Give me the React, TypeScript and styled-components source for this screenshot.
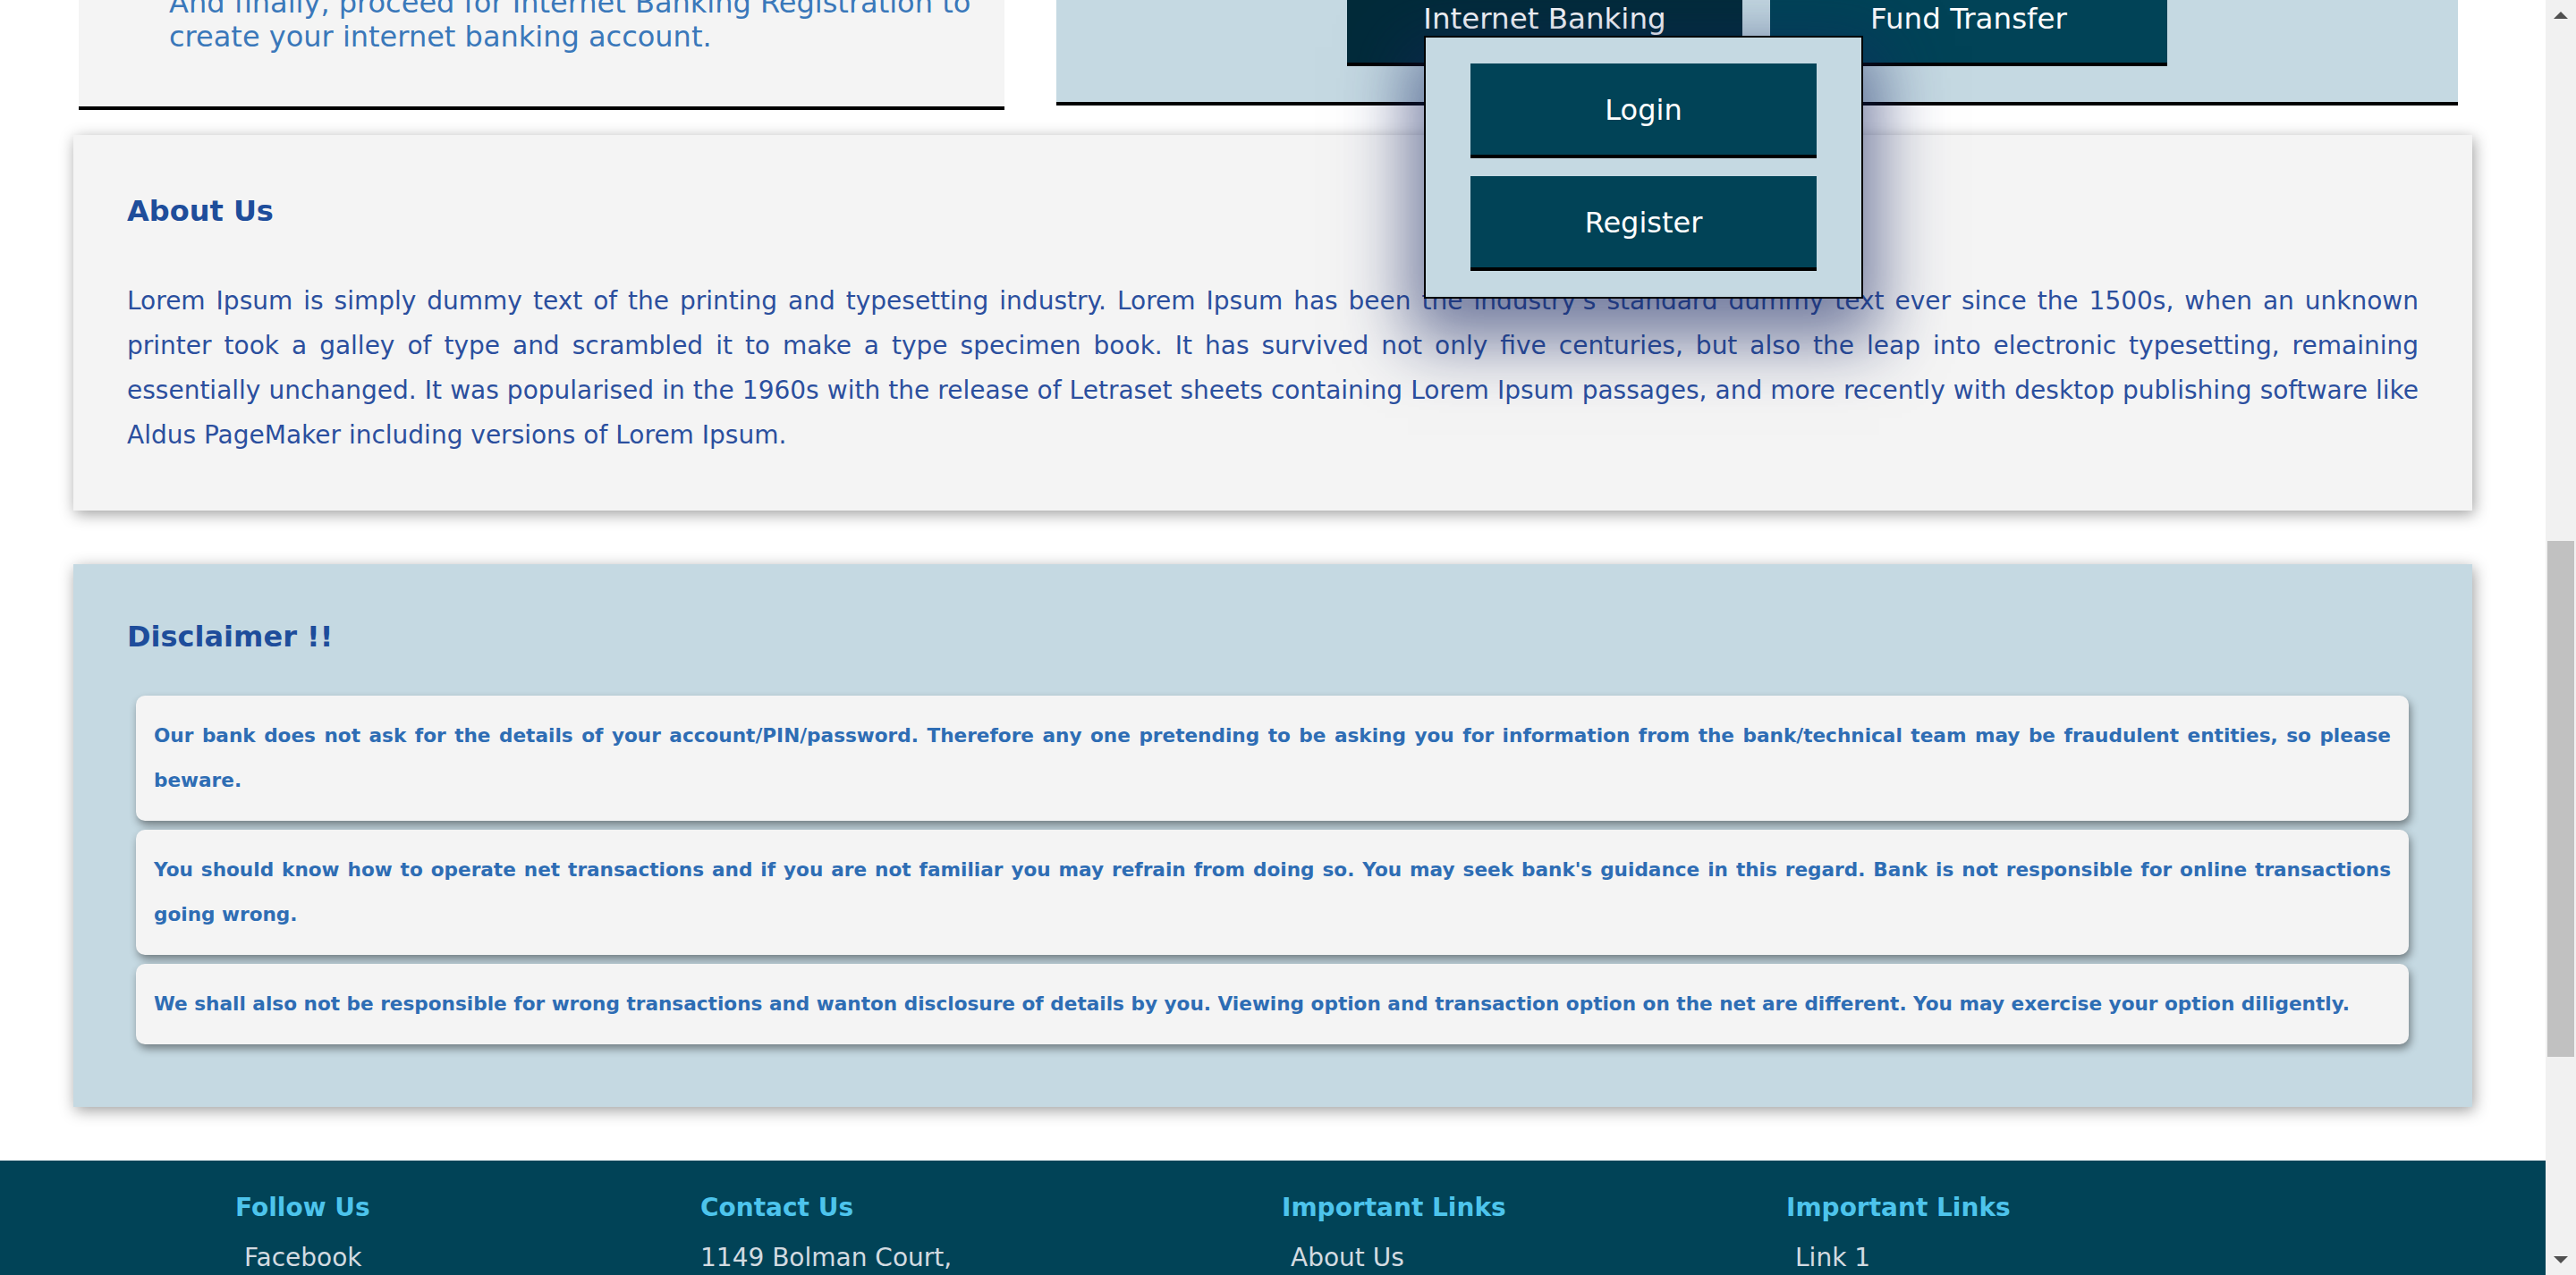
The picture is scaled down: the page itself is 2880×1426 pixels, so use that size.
import React from "react";
import styled, { createGlobalStyle } from "styled-components";

const Global = createGlobalStyle`
  html, body {
    margin: 0;
    padding: 0;
    overflow: hidden;
    background: #ffffff;
  }
  body {
    font-family: "DejaVu Sans", Verdana, "Liberation Sans", sans-serif;
  }
  * { box-sizing: border-box; }
`;

const Root = styled.div`
  display: flex;
  width: 100vw;
  height: 100vh;
  overflow: hidden;
`;

const Page = styled.main`
  flex: 1;
  min-width: 0;
  overflow: hidden;
  background: #ffffff;
`;

const TopRow = styled.section`
  display: flex;
  align-items: flex-start;
  gap: 58px;
  margin-top: -40px;
  padding: 0 98px 0 88px;
`;

const InfoCard = styled.div`
  width: 1035px;
  flex: none;
  background: #f4f4f4;
  border-bottom: 4px solid #000;
  padding: 24px 20px 59px 101px;
`;

const InfoText = styled.p`
  margin: 0;
  font-size: 32px;
  line-height: 38px;
  color: #3a78ba;
`;

const TabsCard = styled.div`
  flex: 1;
  background: #c5d9e2;
  border-bottom: 4px solid #000;
  padding: 12px 0 40px;
  display: flex;
  justify-content: center;
  gap: 31px;
`;

const TabWrap = styled.div`
  position: relative;
`;

const Tab = styled.div<{ $active?: boolean }>`
  width: ${(p) => (p.$active ? 442 : 444)}px;
  padding: 30px 0;
  text-align: center;
  font-size: 32.5px;
  line-height: 38px;
  color: #ffffff;
  background: ${(p) => (p.$active ? "#022b3a" : "#014357")};
  border-bottom: 4px solid #000;
`;

const Dropdown = styled.div`
  position: absolute;
  top: 68px;
  left: 86px;
  z-index: 5;
  width: 491px;
  background: #c5d9e2;
  border: 2px solid #000;
  padding: 29px 50px;
  display: flex;
  flex-direction: column;
  gap: 20px;
  box-shadow: 0 30px 70px 18px rgba(22, 38, 98, 0.58);
`;

const MenuButton = styled.div`
  height: 106px;
  background: #014357;
  border-bottom: 4px solid #000;
  color: #ffffff;
  font-size: 32px;
  display: flex;
  align-items: center;
  justify-content: center;
  padding-top: 2px;
`;

const Card = styled.section<{ $tone?: "light" | "blue"; $top: number; $padTop: number; $bottom: number }>`
  margin: ${(p) => p.$top}px 82px 0;
  background: ${(p) => (p.$tone === "blue" ? "#c5d9e2" : "#f4f4f4")};
  padding: ${(p) => p.$padTop}px 60px ${(p) => p.$bottom}px;
  box-shadow: 2px 4px 16px rgba(0, 0, 0, 0.38);
`;

const CardTitle = styled.h2`
  margin: 0;
  font-size: 32px;
  line-height: 40px;
  font-weight: bold;
  color: #1e4d9b;
`;

const Paragraph = styled.p`
  margin: 56px 0 0;
  font-size: 28px;
  line-height: 50px;
  color: #2b4f9e;
  text-align: justify;
`;

const NoticeList = styled.div`
  margin: 46px 11px 0 10px;
  display: flex;
  flex-direction: column;
  gap: 10px;
`;

const Notice = styled.p`
  margin: 0;
  padding: 20px;
  background: #f4f4f4;
  border-radius: 10px;
  box-shadow: 2px 5px 10px rgba(0, 0, 0, 0.42);
  font-size: 21.6px;
  line-height: 50px;
  font-weight: bold;
  color: #2e6db4;
  text-align: justify;
`;

const Footer = styled.footer`
  margin-top: 60px;
  background: #014357;
  min-height: 400px;
  padding: 35px 0 0 263px;
  display: grid;
  grid-template-columns: 520px 650px 564px 1fr;
`;

const FooterCol = styled.div`
  display: flex;
  flex-direction: column;
`;

const FooterTitle = styled.h4`
  margin: 0;
  font-size: 28px;
  line-height: 36px;
  font-weight: bold;
  color: #4dc4ec;
`;

const FooterItem = styled.div<{ $indent?: boolean }>`
  margin-top: 20px;
  padding-left: ${(p) => (p.$indent ? 10 : 0)}px;
  font-size: 28px;
  line-height: 36px;
  color: #d3dbe1;
`;

const ScrollTrack = styled.div`
  width: 34px;
  flex: none;
  background: #f1f1f1;
  display: flex;
  flex-direction: column;
`;

const ScrollArrow = styled.div`
  height: 34px;
  display: flex;
  align-items: center;
  justify-content: center;
`;

const ScrollArea = styled.div`
  flex: 1;
  padding: 571px 2px 0;
`;

const ScrollThumb = styled.div`
  height: 577px;
  background: #c1c1c1;
`;

const Arrow = ({ down }: { down?: boolean }) => (
  <svg width="18" height="10" viewBox="0 0 18 10">
    <polygon points={down ? "1,1 17,1 9,9" : "1,9 17,9 9,1"} fill="#505050" />
  </svg>
);

export default function App() {
  return (
    <>
      <Global />
      <Root>
        <Page>
          <TopRow>
            <InfoCard>
              <InfoText>
                And finally, proceed for Internet Banking Registration to create your internet banking account.
              </InfoText>
            </InfoCard>
            <TabsCard>
              <TabWrap>
                <Tab $active>Internet Banking</Tab>
                <Dropdown>
                  <MenuButton>Login</MenuButton>
                  <MenuButton>Register</MenuButton>
                </Dropdown>
              </TabWrap>
              <Tab>Fund Transfer</Tab>
            </TabsCard>
          </TopRow>

          <Card $top={28} $padTop={65} $bottom={59}>
            <CardTitle>About Us</CardTitle>
            <Paragraph>
              Lorem Ipsum is simply dummy text of the printing and typesetting industry. Lorem Ipsum has been the
              industry's standard dummy text ever since the 1500s, when an unknown printer took a galley of type and
              scrambled it to make a type specimen book. It has survived not only five centuries, but also the leap
              into electronic typesetting, remaining essentially unchanged. It was popularised in the 1960s with the
              release of Letraset sheets containing Lorem Ipsum passages, and more recently with desktop publishing
              software like Aldus PageMaker including versions of Lorem Ipsum.
            </Paragraph>
          </Card>

          <Card $tone="blue" $top={60} $padTop={61} $bottom={70}>
            <CardTitle>Disclaimer !!</CardTitle>
            <NoticeList>
              <Notice>
                Our bank does not ask for the details of your account/PIN/password. Therefore any one pretending to be
                asking you for information from the bank/technical team may be fraudulent entities, so please beware.
              </Notice>
              <Notice>
                You should know how to operate net transactions and if you are not familiar you may refrain from doing
                so. You may seek bank's guidance in this regard. Bank is not responsible for online transactions going
                wrong.
              </Notice>
              <Notice>
                We shall also not be responsible for wrong transactions and wanton disclosure of details by you. Viewing
                option and transaction option on the net are different. You may exercise your option diligently.
              </Notice>
            </NoticeList>
          </Card>

          <Footer>
            <FooterCol>
              <FooterTitle>Follow Us</FooterTitle>
              <FooterItem $indent>Facebook</FooterItem>
            </FooterCol>
            <FooterCol>
              <FooterTitle>Contact Us</FooterTitle>
              <FooterItem>1149 Bolman Court,</FooterItem>
            </FooterCol>
            <FooterCol>
              <FooterTitle>Important Links</FooterTitle>
              <FooterItem $indent>About Us</FooterItem>
            </FooterCol>
            <FooterCol>
              <FooterTitle>Important Links</FooterTitle>
              <FooterItem $indent>Link 1</FooterItem>
            </FooterCol>
          </Footer>
        </Page>
        <ScrollTrack>
          <ScrollArrow>
            <Arrow />
          </ScrollArrow>
          <ScrollArea>
            <ScrollThumb />
          </ScrollArea>
          <ScrollArrow>
            <Arrow down />
          </ScrollArrow>
        </ScrollTrack>
      </Root>
    </>
  );
}
